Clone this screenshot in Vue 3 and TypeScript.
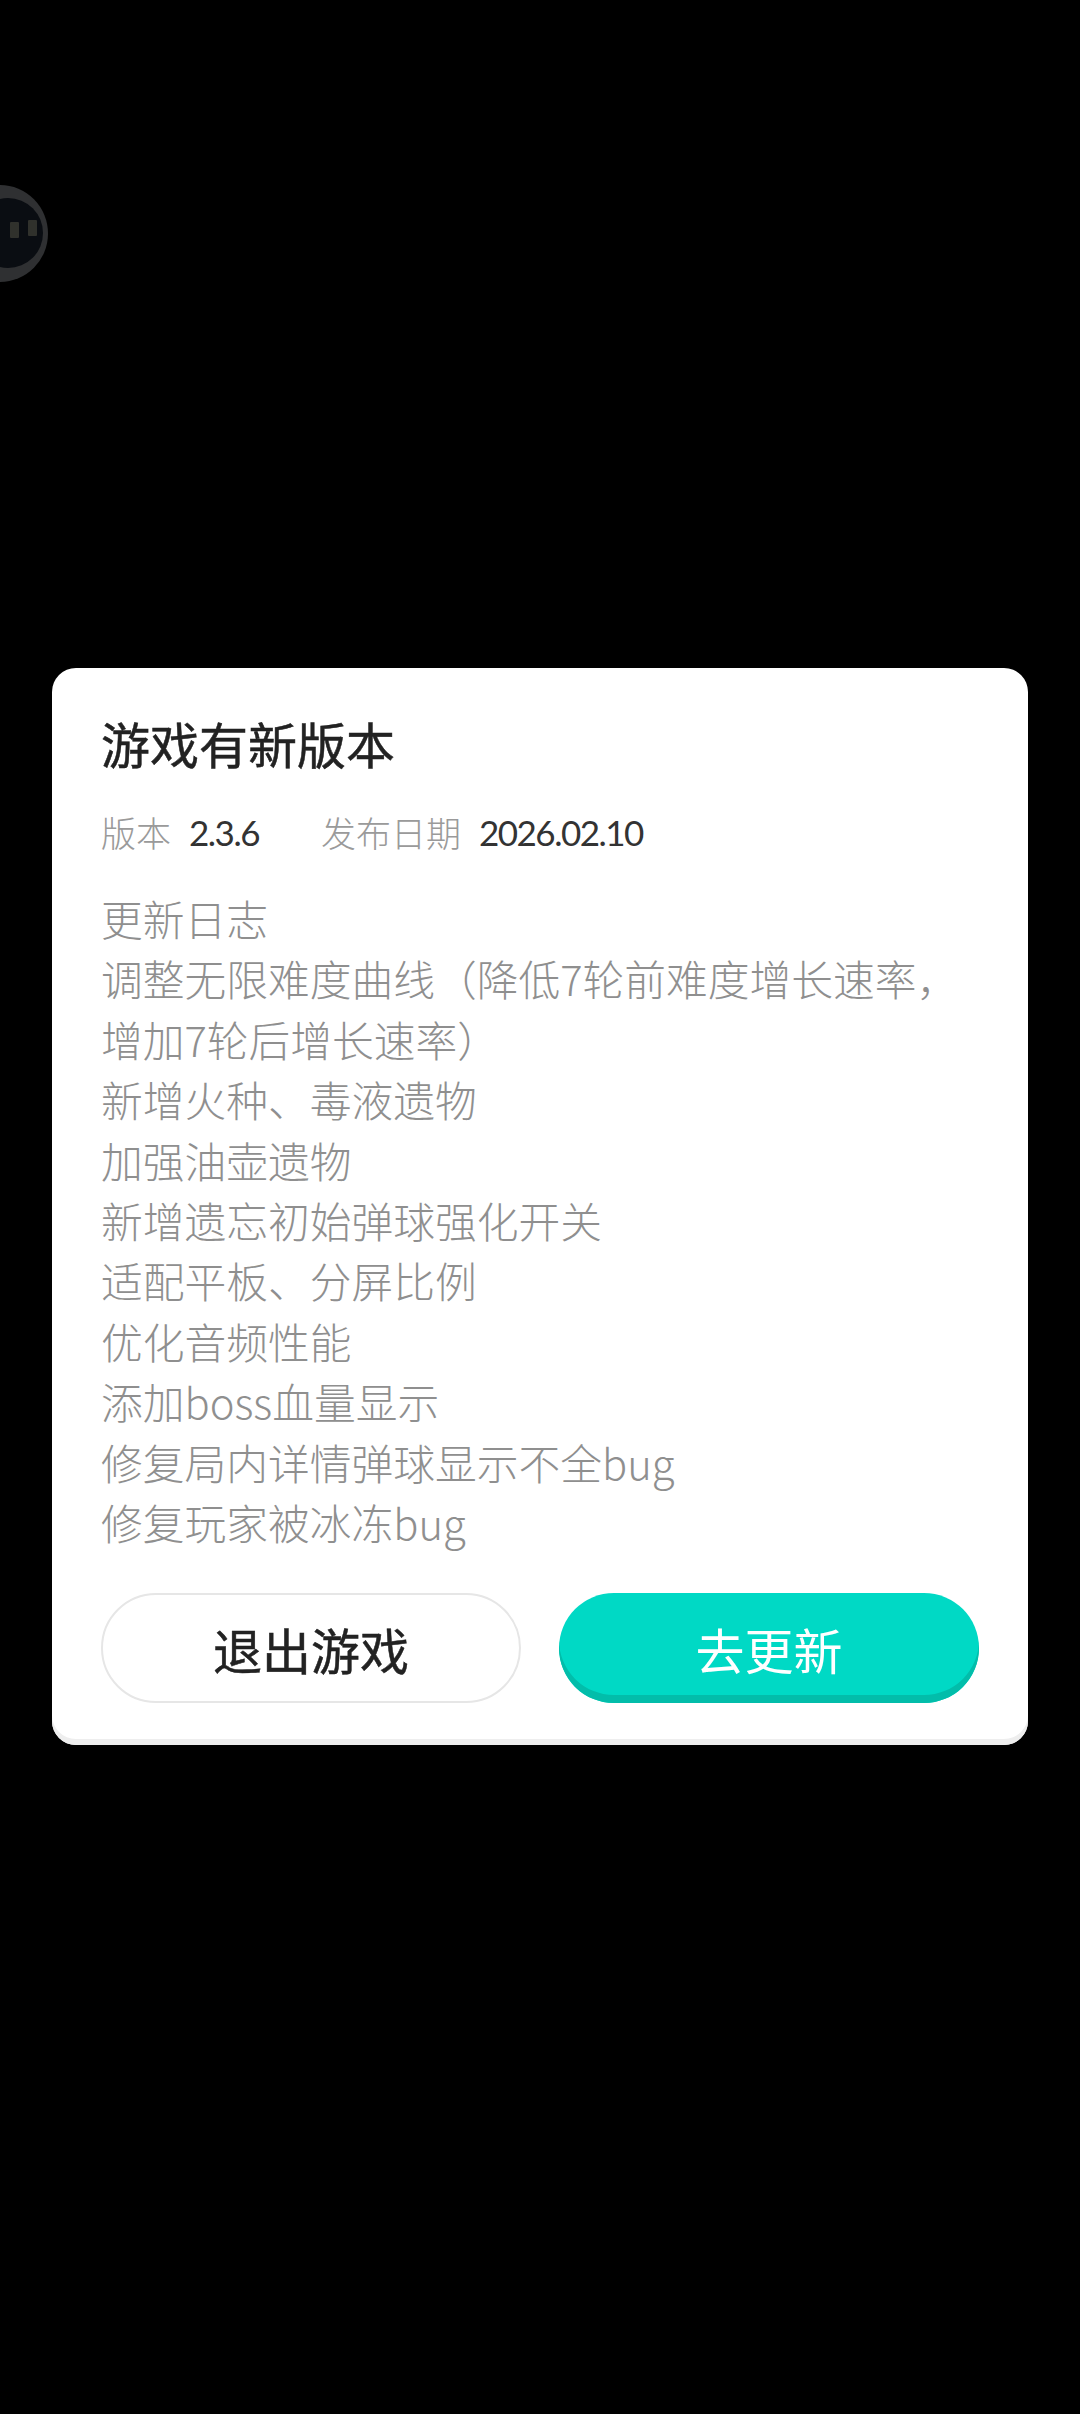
<script setup lang="ts">
const logLines: string[] = [
  '更新日志',
  '调整无限难度曲线（降低7轮前难度增长速率，',
  '增加7轮后增长速率）',
  '新增火种、毒液遗物',
  '加强油壶遗物',
  '新增遗忘初始弹球强化开关',
  '适配平板、分屏比例',
  '优化音频性能',
  '添加boss血量显示',
  '修复局内详情弹球显示不全bug',
  '修复玩家被冰冻bug',
]
</script>

<template>
  <div class="screen">
    <div class="float-ball">
      <div class="ball-face">
        <span class="eye eye-left"></span>
        <span class="eye eye-right"></span>
      </div>
    </div>

    <div class="dialog">
      <h1 class="title">游戏有新版本</h1>
      <div class="meta">
        <span class="label">版本</span>
        <span class="value version">2.3.6</span>
        <span class="label">发布日期</span>
        <span class="value">2026.02.10</span>
      </div>
      <div class="log">
        <div v-for="line in logLines" :key="line" class="log-line">{{ line }}</div>
      </div>
      <div class="actions">
        <button class="btn btn-quit">退出游戏</button>
        <button class="btn btn-update">去更新</button>
      </div>
    </div>
  </div>
</template>

<style>
html,
body {
  margin: 0;
  background: #000;
}
</style>

<style scoped>
.screen {
  position: relative;
  box-sizing: border-box;
  height: 2414px;
  padding: 668px 52px 0;
  background: #000;
  overflow: hidden;
  font-family: "Noto Sans CJK SC", "Noto Sans", sans-serif;
}

.float-ball {
  position: absolute;
  left: -48px;
  top: 185px;
  width: 96px;
  height: 97px;
  border-radius: 50%;
  background: #2f3032;
}

.ball-face {
  position: absolute;
  left: 21px;
  top: 13px;
  width: 70px;
  height: 70px;
  border-radius: 50%;
  background: #0a0d12;
}

.eye {
  position: absolute;
  width: 9px;
  height: 16px;
  background: #30312c;
  border-radius: 1px;
}

.eye-left {
  left: 37px;
  top: 24px;
}

.eye-right {
  left: 55px;
  top: 22px;
}

.dialog {
  box-sizing: border-box;
  width: 976px;
  height: 1077px;
  padding: 45px 49px 0;
  background: #fff;
  border-radius: 24px;
  box-shadow: inset 0 -6px 0 #eeeeee;
}

.title {
  margin: 0;
  font-size: 49px;
  font-weight: 400;
  line-height: 60px;
  color: #222;
  -webkit-text-stroke: 0.5px #222;
}

.meta {
  display: flex;
  align-items: center;
  margin-top: 35px;
  font-size: 35px;
  line-height: 48px;
  font-weight: 300;
}

.label {
  color: #9a9a9a;
}

.value {
  margin-left: 18px;
  color: #333;
  font-family: "Lato", "Noto Sans CJK SC", sans-serif;
  font-weight: 400;
  letter-spacing: -1.5px;
}

.version {
  margin-right: 62px;
}

.log {
  margin-top: 32px;
}

.log-line {
  font-size: 41.75px;
  font-weight: 300;
  line-height: 60.4px;
  color: #8f8f8f;
  white-space: nowrap;
}

.actions {
  display: flex;
  justify-content: space-between;
  margin-top: 41px;
}

.btn {
  box-sizing: border-box;
  width: 420px;
  height: 110px;
  padding: 0;
  border-radius: 55px;
  font-family: inherit;
  font-size: 49px;
  font-weight: 400;
}

.btn-quit {
  background: #fff;
  border: 2px solid #e6e6e6;
  color: #222;
  -webkit-text-stroke: 0.5px #222;
}

.btn-update {
  background: #00d9c5;
  border: none;
  color: #fff;
  box-shadow: inset 0 -8px 0 #02bdaa;
}
</style>
